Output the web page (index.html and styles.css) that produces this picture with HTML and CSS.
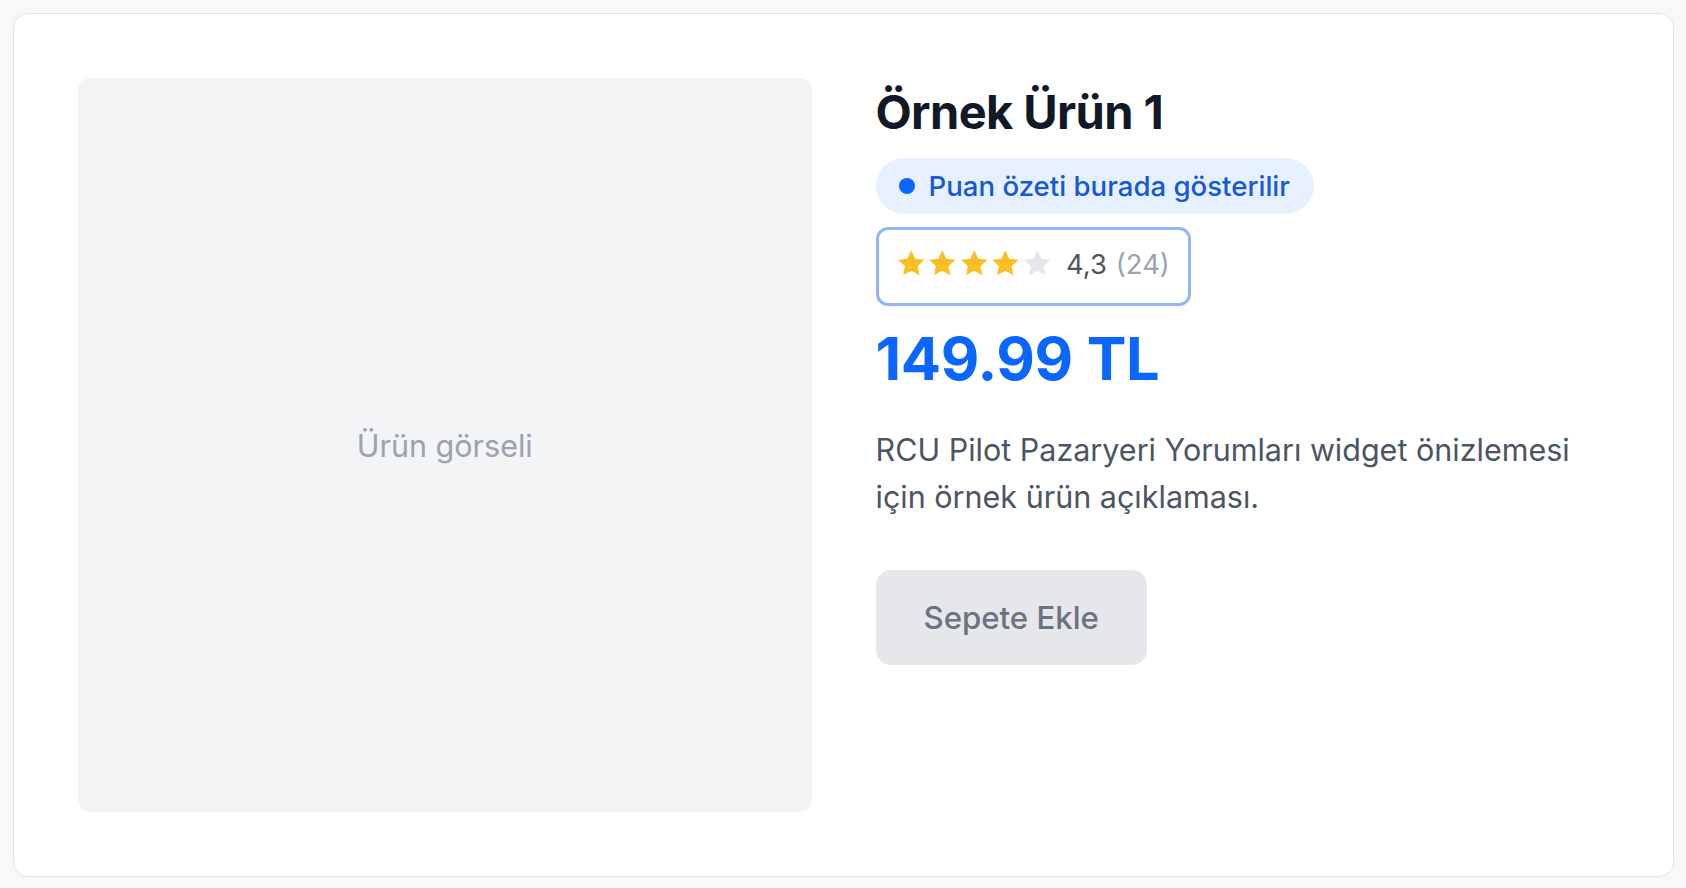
FILE: index.html
```html
<!DOCTYPE html>
<html lang="tr">
<head>
<meta charset="utf-8">
<title>Örnek Ürün 1</title>
<link rel="stylesheet" href="styles.css">
</head>
<body>
  <main class="card">
    <div class="media">Ürün görseli</div>
    <section class="info">
      <h1 class="title">Örnek Ürün 1</h1>
      <div class="pill-row">
        <span class="pill"><span class="dot"></span>Puan özeti burada gösterilir</span>
      </div>
      <div class="rating-row">
        <div class="rating">
          <span class="stars">
            <svg class="star on" viewBox="0 0 24 24"><path d="M12 1.8l3.1 6.6 7.2.9-5.3 5 1.4 7.1L12 17.9l-6.4 3.5 1.4-7.1-5.3-5 7.2-.9z"/></svg>
            <svg class="star on" viewBox="0 0 24 24"><path d="M12 1.8l3.1 6.6 7.2.9-5.3 5 1.4 7.1L12 17.9l-6.4 3.5 1.4-7.1-5.3-5 7.2-.9z"/></svg>
            <svg class="star on" viewBox="0 0 24 24"><path d="M12 1.8l3.1 6.6 7.2.9-5.3 5 1.4 7.1L12 17.9l-6.4 3.5 1.4-7.1-5.3-5 7.2-.9z"/></svg>
            <svg class="star on" viewBox="0 0 24 24"><path d="M12 1.8l3.1 6.6 7.2.9-5.3 5 1.4 7.1L12 17.9l-6.4 3.5 1.4-7.1-5.3-5 7.2-.9z"/></svg>
            <svg class="star off" viewBox="0 0 24 24"><path d="M12 1.8l3.1 6.6 7.2.9-5.3 5 1.4 7.1L12 17.9l-6.4 3.5 1.4-7.1-5.3-5 7.2-.9z"/></svg>
          </span>
          <span class="score">4,3</span>
          <span class="count">(24)</span>
        </div>
      </div>
      <div class="price">149.99 TL</div>
      <p class="desc">RCU Pilot Pazaryeri Yorumları widget önizlemesi için örnek ürün açıklaması.</p>
      <div class="actions">
        <button class="add" type="button" disabled>Sepete Ekle</button>
      </div>
    </section>
  </main>
</body>
</html>
```

FILE: styles.css
```css
* { box-sizing: border-box; }

html, body { height: 100%; }

body {
  margin: 0;
  padding: 13px 12px 11px 13px;
  background: #f8f8f9;
  font-family: Inter, "Noto Sans", "Liberation Sans", sans-serif;
  color: #111827;
}

.card {
  background: #ffffff;
  border: 1px solid #e3e4e8;
  border-radius: 15px;
  padding: 64px;
  display: grid;
  grid-template-columns: 1fr 1fr;
  column-gap: 64px;
}

.media {
  aspect-ratio: 1 / 1;
  background: #f3f4f6;
  border-radius: 12px;
  display: flex;
  align-items: center;
  justify-content: center;
  color: #9ca3af;
  font-size: 30.5px;
  padding-top: 2px;
}

.info {
  display: flex;
  flex-direction: column;
  align-items: flex-start;
}

.title {
  margin: 3px 0 0;
  font-size: 47px;
  line-height: 62px;
  font-weight: 700;
  letter-spacing: -0.6px;
  color: #111827;
}

.pill-row { margin-top: 15px; display: flex; }

.pill {
  display: inline-flex;
  align-items: center;
  gap: 14px;
  height: 56px;
  padding: 0 24px 0 23px;
  border-radius: 9999px;
  background: #e7f0ff;
  color: #1559d6;
  font-size: 27.6px;
  font-weight: 500;
}

.dot {
  width: 16px;
  height: 16px;
  border-radius: 50%;
  background: #0b66ff;
  flex: none;
}

.rating-row { margin-top: 13px; display: flex; }

.rating {
  display: inline-flex;
  align-items: center;
  height: 79px;
  padding: 0 18px 6px 17px;
  border: 3.5px solid #93b6fb;
  border-radius: 12px;
  font-size: 27.4px;
}

.stars {
  display: inline-flex;
  gap: 1px;
  margin-right: 14px;
}

.star {
  width: 30.5px;
  height: 30.5px;
  display: block;
}

.star.on { fill: #fbbf24; }
.star.off { fill: #e5e7eb; }

.score { color: #4b5563; }
.count { color: #9ca3af; margin-left: 9px; }

.price {
  margin-top: 17px;
  font-size: 59.5px;
  line-height: 70px;
  font-weight: 700;
  color: #0b66ff;
  letter-spacing: -0.3px;
}

.desc {
  margin: 33px 0 0;
  font-size: 30.5px;
  line-height: 47px;
  color: #4b5563;
}

.actions { margin-top: 50px; display: flex; }

.add {
  font-family: inherit;
  font-size: 31.2px;
  font-weight: 500;
  color: #6b7280;
  background: #e5e7eb;
  border: none;
  border-radius: 15px;
  height: 95px;
  padding: 0 48px;
  cursor: not-allowed;
}
```
